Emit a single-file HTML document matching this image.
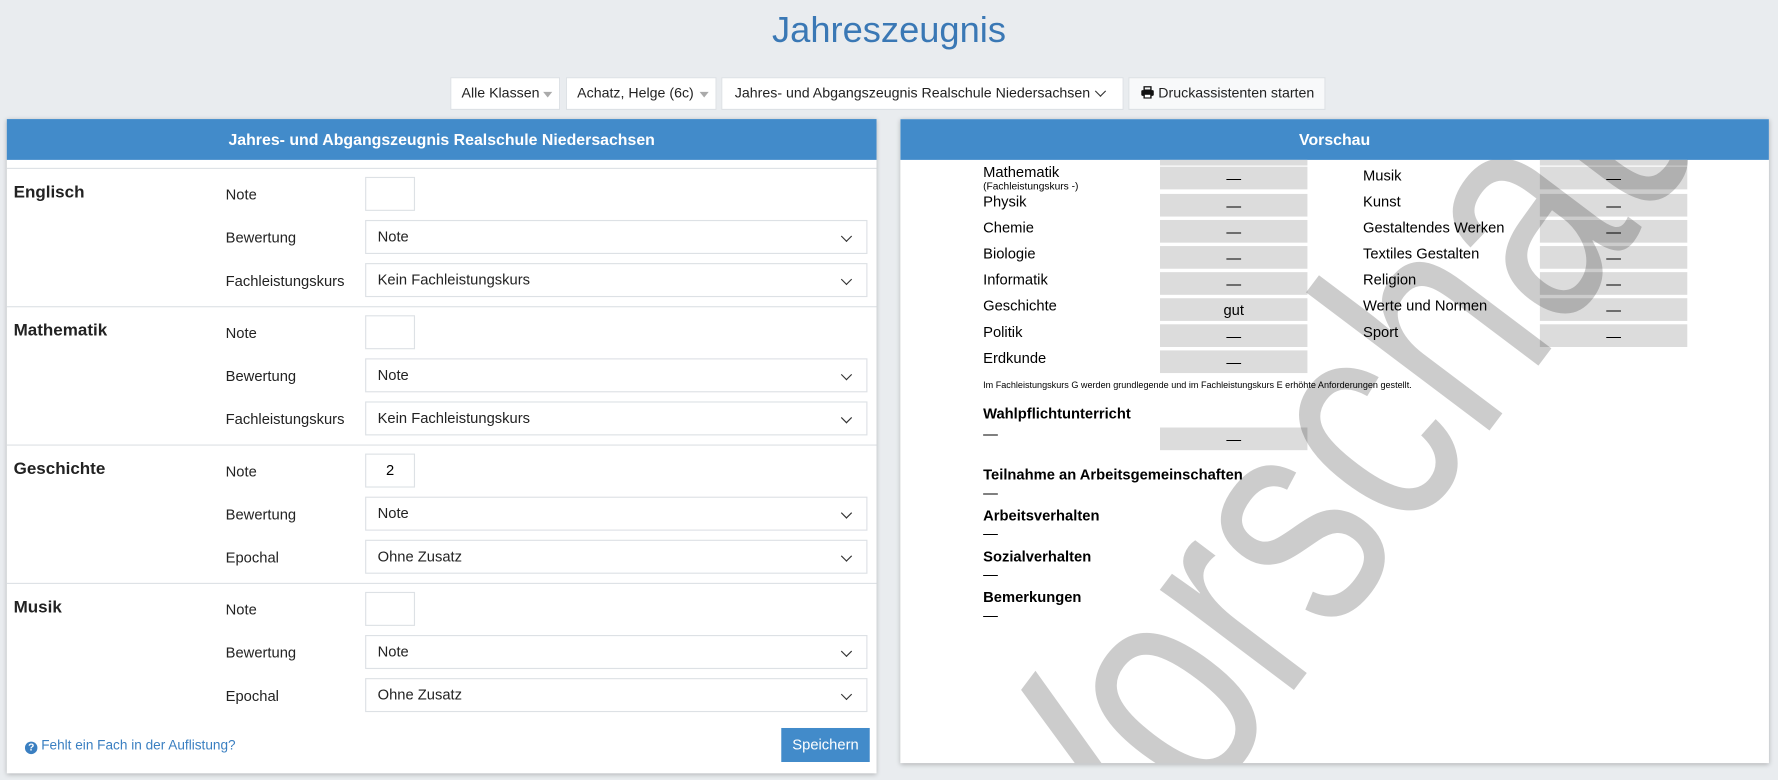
<!DOCTYPE html>
<html><head><meta charset="utf-8"><style>
html,body{margin:0;padding:0;width:1778px;height:780px;overflow:hidden;background:#e9ecef;font-family:"Liberation Sans",Arial,sans-serif;}
#w{position:absolute;left:0;top:0;width:1568px;height:687px;overflow:hidden;transform:scale(1.13393);transform-origin:0 0;}
.abs{position:absolute;}
h1{position:absolute;left:0;width:1568px;top:8px;margin:0;text-align:center;font-weight:normal;font-size:32px;color:#3a78b5;}
.tb{position:absolute;top:68px;height:29px;background:#fff;border:1px solid #dde1e5;box-sizing:border-box;font-size:12.5px;color:#222;line-height:27px;padding-left:9px;white-space:nowrap;}
.caret{position:absolute;top:12px;width:0;height:0;border-left:4px solid transparent;border-right:4px solid transparent;border-top:5px solid #aaa;}
.panel{position:absolute;top:105px;background:#fff;box-shadow:0 1px 4px rgba(0,0,0,.25);}
.ph{height:36px;background:#428bca;color:#fff;font-weight:bold;font-size:14px;text-align:center;line-height:36px;}
.sec{position:absolute;left:0;width:767px;height:122px;border-top:1px solid #dde1e5;}
.subj{position:absolute;left:6px;top:12px;font-weight:bold;font-size:15px;color:#222;}
.lbl{position:absolute;left:193px;font-size:13px;color:#222;}
.inp{position:absolute;left:316px;width:44px;height:30px;border:1px solid #dde1e5;box-sizing:border-box;font-size:13px;text-align:center;line-height:28px;}
.sel{position:absolute;left:316px;width:443px;height:30px;border:1px solid #dde1e5;box-sizing:border-box;font-size:13px;line-height:28px;padding-left:10px;color:#222;}
.chev{position:absolute;right:14px;top:10px;width:6px;height:6px;border-right:1.5px solid #333;border-bottom:1.5px solid #333;transform:rotate(45deg);}
.pl{position:absolute;font-size:13px;color:#000;}
.gb{position:absolute;width:130px;height:20px;background:#dcdcdc;text-align:center;font-size:13px;line-height:22px;color:#000;}
.bh{position:absolute;left:73px;font-weight:bold;font-size:13px;color:#000;}
</style></head><body><div id="w">
<h1>Jahreszeugnis</h1>
<div class="tb" style="left:397px;width:97px;">Alle Klassen<span class="caret" style="left:81px"></span></div>
<div class="tb" style="left:499px;width:133px;">Achatz, Helge (6c)<span class="caret" style="left:117px"></span></div>
<div class="tb" style="left:636px;width:355px;padding-left:11px;">Jahres- und Abgangszeugnis Realschule Niedersachsen<span class="chev" style="top:8px;right:16px"></span></div>
<div class="tb" style="left:995px;width:174px;background:#f8f9fa;padding-left:10px;"><svg width="12" height="11" viewBox="0 0 12 11" style="vertical-align:-1px"><rect x="3" y="0.5" width="6" height="3" fill="none" stroke="#111" stroke-width="1.2"/><rect x="0.5" y="3.5" width="11" height="5" rx="1" fill="#111"/><rect x="3" y="7" width="6" height="3.5" fill="#fff" stroke="#111" stroke-width="1.2"/></svg> Druckassistenten starten</div>

<div class="panel" style="left:6px;width:767px;height:577px;">
<div class="ph">Jahres- und Abgangszeugnis Realschule Niedersachsen</div>
<div class="sec" style="top:43px"><div class="subj">Englisch</div>
<div class="lbl" style="top:15px">Note</div><div class="inp" style="top:7px"></div>
<div class="lbl" style="top:53px">Bewertung</div><div class="sel" style="top:45px">Note<span class="chev"></span></div>
<div class="lbl" style="top:91px">Fachleistungskurs</div><div class="sel" style="top:83px">Kein Fachleistungskurs<span class="chev"></span></div></div>
<div class="sec" style="top:165px"><div class="subj">Mathematik</div>
<div class="lbl" style="top:15px">Note</div><div class="inp" style="top:7px"></div>
<div class="lbl" style="top:53px">Bewertung</div><div class="sel" style="top:45px">Note<span class="chev"></span></div>
<div class="lbl" style="top:91px">Fachleistungskurs</div><div class="sel" style="top:83px">Kein Fachleistungskurs<span class="chev"></span></div></div>
<div class="sec" style="top:287px"><div class="subj">Geschichte</div>
<div class="lbl" style="top:15px">Note</div><div class="inp" style="top:7px">2</div>
<div class="lbl" style="top:53px">Bewertung</div><div class="sel" style="top:45px">Note<span class="chev"></span></div>
<div class="lbl" style="top:91px">Epochal</div><div class="sel" style="top:83px">Ohne Zusatz<span class="chev"></span></div></div>
<div class="sec" style="top:409px"><div class="subj">Musik</div>
<div class="lbl" style="top:15px">Note</div><div class="inp" style="top:7px"></div>
<div class="lbl" style="top:53px">Bewertung</div><div class="sel" style="top:45px">Note<span class="chev"></span></div>
<div class="lbl" style="top:91px">Epochal</div><div class="sel" style="top:83px">Ohne Zusatz<span class="chev"></span></div></div>
<div class="abs" style="left:16px;top:545px;font-size:12px;color:#3a7fc1;"><span style="display:inline-block;width:11px;height:11px;border-radius:50%;background:#3a7fc1;color:#fff;font-size:9px;font-weight:bold;text-align:center;line-height:11px;vertical-align:-1px">?</span> Fehlt ein Fach in der Auflistung?</div>
<div class="abs" style="left:683px;top:537px;width:78px;height:30px;background:#428bca;color:#fff;font-size:13px;text-align:center;line-height:30px;">Speichern</div>
</div>

<div class="panel" style="left:794px;width:766px;height:568px;overflow:hidden;">
<div class="ph">Vorschau</div>
<div class="gb" style="left:229px;top:36px;height:5px"></div>
<div class="gb" style="left:564px;top:36px;height:5px"></div>
<div class="pl" style="left:73px;top:39px;">Mathematik<br><span style="font-size:9px;position:relative;top:-4px">(Fachleistungskurs -)</span></div>
<div class="pl" style="left:73px;top:65px;">Physik</div>
<div class="pl" style="left:73px;top:88px;">Chemie</div>
<div class="pl" style="left:73px;top:111px;">Biologie</div>
<div class="pl" style="left:73px;top:134px;">Informatik</div>
<div class="pl" style="left:73px;top:157px;">Geschichte</div>
<div class="pl" style="left:73px;top:180px;">Politik</div>
<div class="pl" style="left:73px;top:203px;">Erdkunde</div>
<div class="gb" style="left:229px;top:42px">—</div>
<div class="gb" style="left:229px;top:66px">—</div>
<div class="gb" style="left:229px;top:89px">—</div>
<div class="gb" style="left:229px;top:112px">—</div>
<div class="gb" style="left:229px;top:135px">—</div>
<div class="gb" style="left:229px;top:158px">gut</div>
<div class="gb" style="left:229px;top:181px">—</div>
<div class="gb" style="left:229px;top:204px">—</div>
<div class="pl" style="left:408px;top:42px;">Musik</div>
<div class="pl" style="left:408px;top:65px;">Kunst</div>
<div class="pl" style="left:408px;top:88px;">Gestaltendes Werken</div>
<div class="pl" style="left:408px;top:111px;">Textiles Gestalten</div>
<div class="pl" style="left:408px;top:134px;">Religion</div>
<div class="pl" style="left:408px;top:157px;">Werte und Normen</div>
<div class="pl" style="left:408px;top:180px;">Sport</div>
<div class="gb" style="left:564px;top:42px">—</div>
<div class="gb" style="left:564px;top:66px">—</div>
<div class="gb" style="left:564px;top:89px">—</div>
<div class="gb" style="left:564px;top:112px">—</div>
<div class="gb" style="left:564px;top:135px">—</div>
<div class="gb" style="left:564px;top:158px">—</div>
<div class="gb" style="left:564px;top:181px">—</div>
<div class="pl" style="left:73px;top:230px;font-size:8px;">Im Fachleistungskurs G werden grundlegende und im Fachleistungskurs E erhöhte Anforderungen gestellt.</div>
<div class="bh" style="top:252px">Wahlpflichtunterricht</div>
<div class="pl" style="left:73px;top:270px">—</div>
<div class="gb" style="left:229px;top:272px">—</div>
<div class="bh" style="top:306px">Teilnahme an Arbeitsgemeinschaften</div>
<div class="pl" style="left:73px;top:322px">—</div>
<div class="bh" style="top:342px">Arbeitsverhalten</div>
<div class="pl" style="left:73px;top:358px">—</div>
<div class="bh" style="top:378px">Sozialverhalten</div>
<div class="pl" style="left:73px;top:394px">—</div>
<div class="bh" style="top:414px">Bemerkungen</div>
<div class="pl" style="left:73px;top:430px">—</div>
<svg class="abs" style="left:0;top:36px" width="766" height="532"><text x="0" y="0" transform="translate(187,680) rotate(-53) scale(1,1.3)" font-family="Liberation Sans,Arial,sans-serif" font-size="215" fill="rgba(0,0,0,0.2)">Vorschau</text></svg>
</div>
</div></body></html>
